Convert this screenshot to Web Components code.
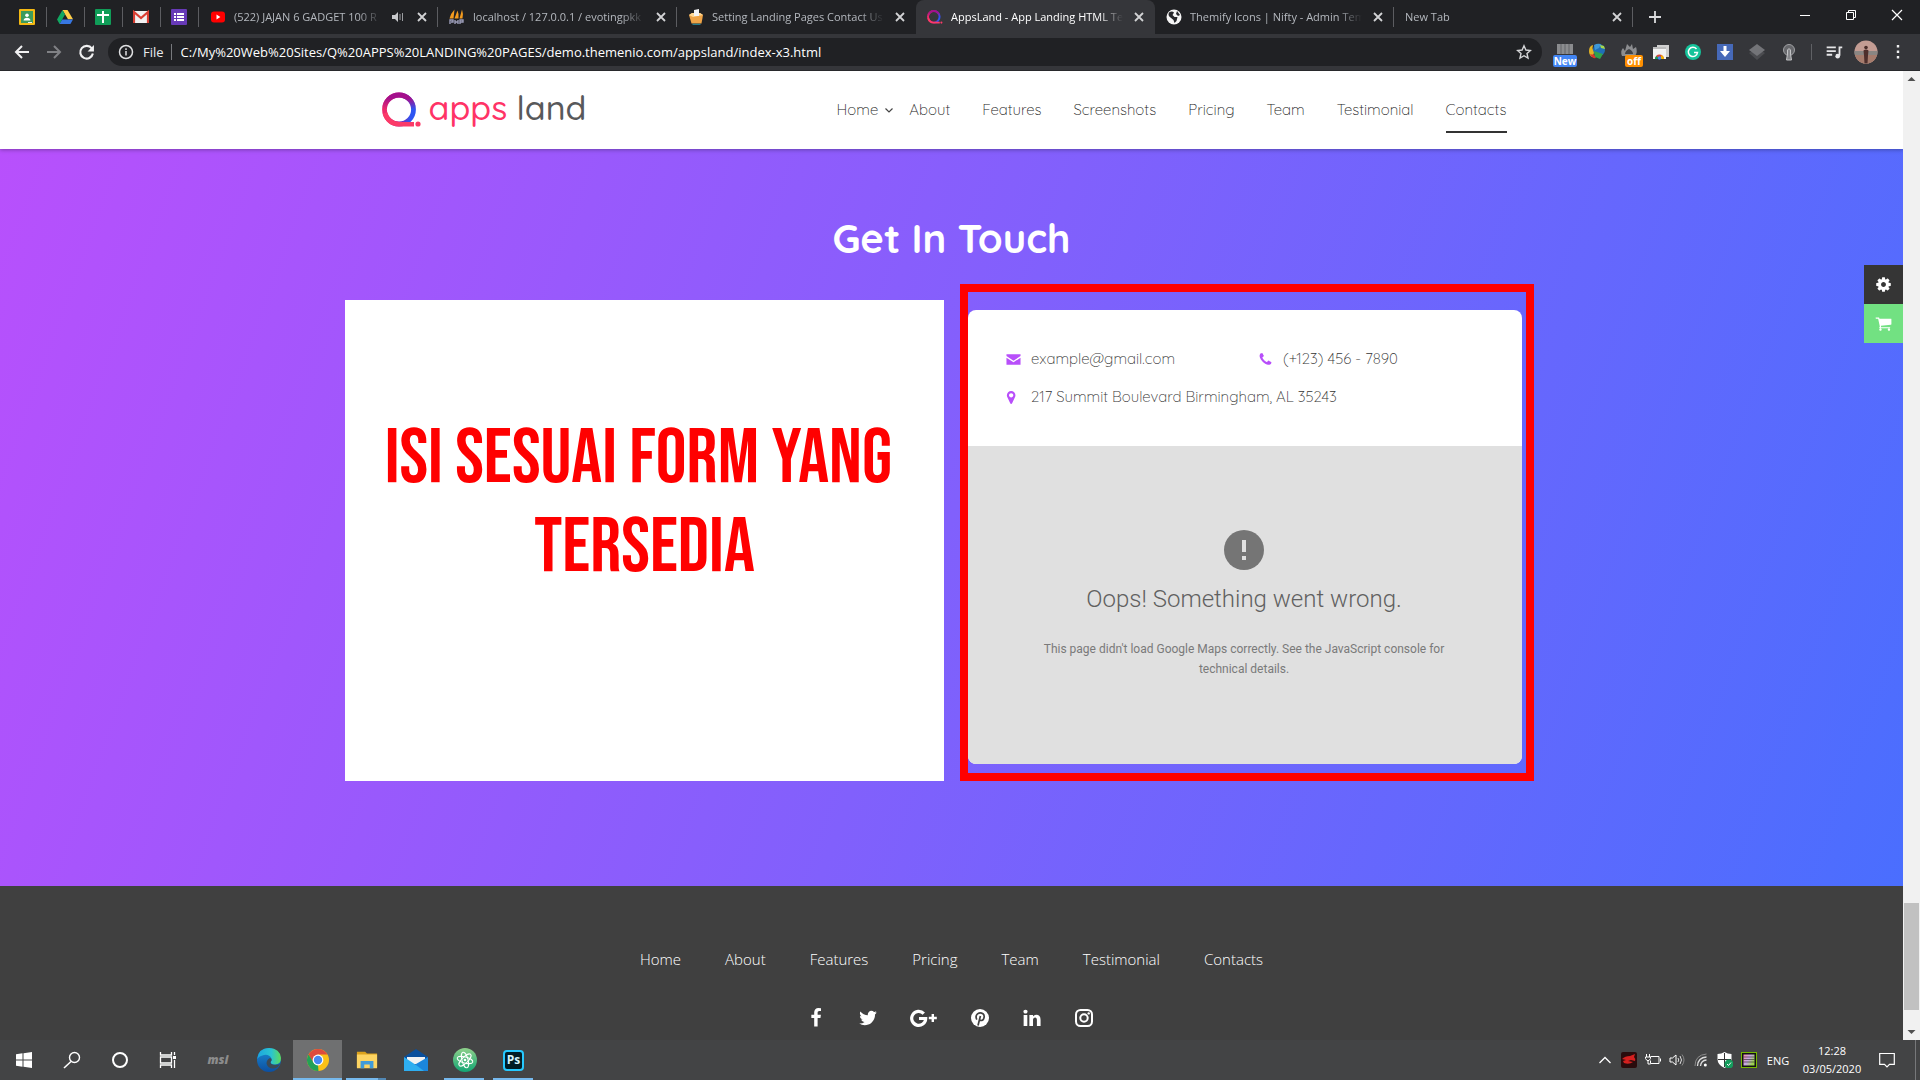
<!DOCTYPE html>
<html lang="en">
<head>
<meta charset="utf-8">
<title>AppsLand - App Landing HTML Template</title>
<style>
html, body { margin: 0; height: 100%; }
body { font-family: "Segoe UI", "Open Sans", "Noto Sans", sans-serif; background: #202124; overflow: hidden; }
</style>
</head>
<body>
<browser-window>
  <tab-strip slot="tabs">
    <browser-tab pinned icon="classroom"></browser-tab>
    <browser-tab pinned icon="drive"></browser-tab>
    <browser-tab pinned icon="sheets"></browser-tab>
    <browser-tab pinned icon="gmail"></browser-tab>
    <browser-tab pinned icon="forms"></browser-tab>
    <browser-tab icon="youtube" audio>(522) JAJAN 6 GADGET 100 R</browser-tab>
    <browser-tab icon="pma">localhost / 127.0.0.1 / evotingpkk</browser-tab>
    <browser-tab icon="box" nosep>Setting Landing Pages Contact Us</browser-tab>
    <browser-tab icon="q" active>AppsLand - App Landing HTML Te</browser-tab>
    <browser-tab icon="globe">Themify Icons | Nifty - Admin Tem</browser-tab>
    <browser-tab>New Tab</browser-tab>
  </tab-strip>
  <tool-bar slot="toolbar" url="C:/My%20Web%20Sites/Q%20APPS%20LANDING%20PAGES/demo.themenio.com/appsland/index-x3.html"></tool-bar>
  <site-header>
    <nav-link menu>Home</nav-link>
    <nav-link>About</nav-link>
    <nav-link>Features</nav-link>
    <nav-link>Screenshots</nav-link>
    <nav-link>Pricing</nav-link>
    <nav-link>Team</nav-link>
    <nav-link>Testimonial</nav-link>
    <nav-link current>Contacts</nav-link>
  </site-header>
  <contact-section>
    <span slot="title">Get In Touch</span>
    <form-note slot="note">ISI SESUAI FORM YANG&nbsp;<br>TERSEDIA</form-note>
    <contact-card slot="card">
      <contact-item icon="mail" href="mailto:example@gmail.com">example@gmail.com</contact-item>
      <contact-item icon="phone" href="tel:+1234567890">(+123) 456 - 7890</contact-item>
      <contact-item icon="pin" wide>217 Summit Boulevard Birmingham, AL 35243</contact-item>
      <map-error slot="map">
        <span slot="heading">Oops! Something went wrong.</span>
        This page didn't load Google Maps correctly. See the JavaScript console for technical details.
      </map-error>
    </contact-card>
  </contact-section>
  <site-footer></site-footer>
  <side-tools slot="tools"></side-tools>
</browser-window>
<task-bar></task-bar>

<script>
const G = '0 0 1792 1792';
const ICONS = {
  classroom: ['0 0 16 16', '<rect width="16" height="16" rx="1" fill="#f4b913"/><rect x="2" y="2" width="12" height="12" fill="#3d9b5c"/><circle cx="8" cy="6.2" r="1.8" fill="#fff"/><path d="M4.5 11.4q.5-2.6 3.5-2.6t3.5 2.6z" fill="#fff"/><path d="M9 14h4v-1H9z" fill="#eee"/>'],
  drive: ['0 0 16 16', '<path d="M5.5 1h5L16 10.2h-5z" fill="#ffcf48"/><path d="M5.5 1 8 5.4 2.6 15 0 10.4z" fill="#11a861"/><path d="M5.2 10.4H16L13.4 15H2.6z" fill="#3777e3"/>'],
  sheets: ['0 0 16 16', '<rect width="16" height="16" rx="1" fill="#109d58"/><path d="M7 2h2v3h5v2H9v7H7V7H2V5h5z" fill="#fff"/>'],
  gmail: ['0 0 16 16', '<path d="M1 2h14v12H1z" fill="#f2f2f2"/><path d="M1 14V3l7 6 7-6v11" fill="none" stroke="#d93f33" stroke-width="2.2"/>'],
  forms: ['0 0 16 16', '<rect width="16" height="16" rx="1" fill="#673ab7"/><path d="M3 4h2v2H3zm0 3h2v2H3zm0 3h2v2H3zm3-6h7v2H6zm0 3h7v2H6zm0 3h7v2H6z" fill="#fff"/>'],
  youtube: ['0 0 16 16', '<rect x="1" y="2.5" width="14" height="11" rx="3" fill="#f00"/><path d="M6.5 5.6 10.4 8l-3.9 2.4z" fill="#fff"/>'],
  pma: ['0 0 16 16', '<path d="M5.500.5Q2 4 .5 9.500h4zM8.500 1.500q1.500 3 1 8H5.500zm4.500-1q1.500 4 .5 9h-3z" fill="#f49b1e"/><path d="M1 15v-4h3v2H2m4-2v4m0-2h3m0-2v4m2 0v-4h3v2h-3" fill="none" stroke="#9b9cb8" stroke-width="1.400"/>'],
  box: ['0 0 16 16', '<path d="m1 6 3-2h8l3 2-1.500 8.500H3.500z" fill="#efa447"/><path d="m1 6 4 2 10-2-3-2H4z" fill="#ffd894"/><path d="M6 1l5-1v7H6z" fill="#f3f4f6"/><path d="M4.500 15.300h8" stroke="#2894a7"/>'],
  q: ['0 0 40 36', '<defs><linearGradient id="a" x1=".1" x2=".9" y1=".6" y2=".7"><stop stop-color="#ee2a6b"/><stop offset=".4" stop-color="#b50d8a"/><stop offset="1" stop-color="#2d55f2"/></linearGradient><linearGradient id="b" x2="0" y2="1"><stop offset=".1" stop-color="#a4108c"/><stop offset=".5" stop-color="#a4108c" stop-opacity="0"/></linearGradient></defs><circle cx="17" cy="17.500" r="14.500" fill="none" stroke="url(#a)" stroke-width="4.800"/><circle cx="17" cy="17.500" r="14.500" fill="none" stroke="url(#b)" stroke-width="4.800"/><path d="M3 21q3 10.500 14 11.200h15" fill="none" stroke="#fb3a68" stroke-width="4.600"/><circle cx="36" cy="32" r="2.600" fill="#fb3a68"/>'],
  globe: ['0 0 16 16', '<circle cx="8" cy="8" r="7.500" fill="#f5f5f5"/><path d="M3 3.500q3-2 5 0L6.500 6l2 2h3l-1 4-2 2-1-3-3-2.500q-3-2-1.500-5zM11 2l3 4-2 1-2-2z" fill="#26272b"/>'],
  audio: ['0 0 16 16', '<path d="M2 6h3l3-3v10l-3-3H2z" fill="#c8c9cc"/><path d="M10 5v6M12.500 4v8" stroke="#9b9da1" fill="none"/>'],
  close: ['0 0 16 16', '<path d="m4 4 8 8m0-8-8 8" stroke="#d2d3d5" stroke-width="1.800"/>'],
  plus: ['0 0 16 16', '<path d="M8 2v12M2 8h12" stroke="#dadbdd" stroke-width="1.800"/>'],
  min: ['0 0 16 16', '<path d="M3 8.500h10" stroke="#fff"/>'],
  max: ['0 0 16 16', '<path d="M3.500 5.500h7v7h-7zm2 0v-2h7v7h-2" fill="none" stroke="#fff"/>'],
  exit: ['0 0 16 16', '<path d="m3 3 10 10m0-10L3 13" stroke="#fff" stroke-width="1.200"/>'],
  back: ['0 0 16 16', '<path d="M15 8H2m6-6L2 8l6 6" fill="none" stroke="#f1f1f2" stroke-width="2"/>'],
  fwd: ['0 0 16 16', '<path d="M1 8h13M8 2l6 6-6 6" fill="none" stroke="#808185" stroke-width="2"/>'],
  reload: ['0 0 16 16', '<path d="M13 4.200A6 6 0 1 0 14 9" fill="none" stroke="#f1f1f2" stroke-width="2"/><path d="M15 1v6H9z" fill="#f1f1f2"/>'],
  info: ['0 0 16 16', '<circle cx="8" cy="8" r="6.500" fill="none" stroke="#dfe0e2" stroke-width="1.500"/><path d="M8 7v4.500M8 4.300v1.600" stroke="#dfe0e2" stroke-width="1.500"/>'],
  star: ['0 0 16 16', '<path d="m8 1.800 1.900 4.200 4.500.5-3.400 3 1 4.500-4-2.300L4 14l1-4.500-3.400-3L6.100 6z" fill="none" stroke="#d4d5d7" stroke-width="1.400"/>'],
  book: ['0 0 24 24', '<path d="M4 4h16v10H4z" fill="#8b8c8f"/><path d="M12 4v10M8 4v10m8-10v10" stroke="#636468"/>'],
  idm: ['0 0 24 24', '<circle cx="14" cy="10" r="6" fill="#1f6fb8"/><path d="M9 5q3-2 7-1l-2 4-4 2z" fill="#3f97d6"/><path d="m15 5 4 1 1 3-4-1z" fill="#a8d84c"/><path d="M4 11q0-5 4-6-1 3 0 5l1 3-2 4q-3-2-3-6z" fill="#e2b326"/><path d="M5 14q3 1 4 0l2 4q-4 1-6-4z" fill="#d9372d"/><path d="m9 11 9 3-3 5-5-2z" fill="#30a24c"/>'],
  fire: ['0 0 24 24', '<path d="M5 16q-2-5 1-8l2 3 2-7 3 3 2-3 1 5 3-2q2 5-1 9z" fill="#8c8d90"/><path d="M8 14q0-3 4-5 4 2 4 5z" fill="#404246"/>'],
  store: ['0 0 24 24', '<path d="M8 5h12v12H8z" fill="#cfcfcf"/><path d="M4 7h13v12H4z" fill="#f3f3f3"/><path d="M4 7h13v2H4z" fill="#bbb"/><path d="M6 19a4.500 4.500 0 0 1 9 0z" fill="#db4437"/><path d="M12 15q3 1 3 4h-3z" fill="#f4b400"/><path d="M6 19q0-2 1.500-3L10 19z" fill="#0f9d58"/><circle cx="10.500" cy="18" r="1.700" fill="#4285f4"/>'],
  gram: ['0 0 24 24', '<circle cx="12" cy="12" r="8" fill="#15c39a"/><path d="M15.500 9A4.600 4.600 0 1 0 16.500 12.500H13" fill="none" stroke="#fff" stroke-width="1.500"/>'],
  down: ['0 0 24 24', '<rect x="4" y="4" width="16" height="16" fill="#4669b8"/><path d="M10.500 6h3v5H17l-5 6-5-6h3.500z" fill="#fff"/>'],
  layers: ['0 0 24 24', '<path d="m12 8 8 5-8 7-8-7z" fill="#4b4c50"/><path d="m12 4 8 6-8 6-8-6z" fill="#737478"/>'],
  touch: ['0 0 24 24', '<circle cx="12" cy="10" r="5.500" fill="#66676b" stroke="#a0a1a4"/><path d="M10.500 10q1.500-3 3 0v4l1 6h-5l1-6z" fill="#85868a" stroke="#c3c4c6"/>'],
  playlist: ['0 0 24 24', '<path d="M4 7h10M4 11h10M4 15h6M18 16V7h3" fill="none" stroke="#e5e5e7" stroke-width="2"/><circle cx="16" cy="16.500" r="2.500" fill="#e5e5e7"/>'],
  avatar: ['0 0 24 24', '<defs><clipPath id="c"><circle cx="12" cy="12" r="11.500"/></clipPath></defs><g clip-path="url(#c)"><path d="M0 0h24v24H0z" fill="#c39c93"/><path d="M0 11h24v4H0z" fill="#8a8683"/><path d="M0 15h24v9H0z" fill="#a67c6d"/><circle cx="12" cy="7.500" r="1.800" fill="#4a2d29"/><path d="M9.500 10.500q2.500-2 5 0l-.5 5-.5 8h-3l-.5-8z" fill="#4e2f2c"/></g>'],
  dots: ['0 0 24 24', '<path d="M10.800 5h2.400v2.400h-2.400zm0 5.500h2.400v2.400h-2.400zm0 5.500h2.400v2.400h-2.400z" fill="#f0f0f1"/>'],
  chevron: ['0 0 10 10', '<path d="m1.500 3.500 3.500 3.500 3.500-3.500" fill="none" stroke="#444" stroke-width="1.200"/>'],
  mail: ['0 0 16 16', '<path d="M.5 2.500h15v1.700L8 9.300.5 4.200zm0 3.500L8 11l7.500-5v7.500H.5z" fill="#b84ffa"/>'],
  phone: [G, '<path fill="#b84ffa" d="M1600 1240q0 27-10 70.500t-21 68.500q-21 50-122 106-94 51-186 51-27 0-53-3.500t-57.500-12.500-47-14.500-55.500-20.500-49-18q-98-35-175-83-127-79-264-216t-216-264q-48-77-83-175-3-9-18-49t-20.500-55.500-14.500-47-12.500-57.500-3.500-53q0-92 51-186 56-101 106-122 25-11 68.500-21t70.500-10q14 0 21 3 18 6 53 76 11 19 30 54t35 63.500 31 53.500q3 4 17.500 25t21.500 35.500 7 28.500q0 20-28.500 50t-62 55-62 53-28.500 46q0 9 5 22.500t8.500 20.500 14 24 11.500 19q76 137 174 235t235 174q2 1 19 11.500t24 14 20.500 8.500 22.500 5q18 0 46-28.500t53-62 55-62 50-28.500q14 0 28.500 7t35.500 21.500 25 17.500q25 15 53.500 31t63.500 35 54 30q70 35 76 53 3 7 3 21z"/>'],
  pin: ['280 0 1792 1792', '<path fill="#b84ffa" d="M1152 640q0-106-75-181t-181-75-181 75-75 181 75 181 181 75 181-75 75-181zm256 0q0 109-33 179l-364 774q-16 33-47.500 52t-67.500 19-67.500-19-46.500-52l-365-774q-33-70-33-179 0-212 150-362t362-150 362 150 150 362z"/>'],
  error: ['0 0 40 40', '<circle cx="20" cy="20" r="20" fill="#757575"/><path d="M18 10h4v12h-4zm0 16h4v4h-4z" fill="#e0e0e0"/>'],
  cog: [G, '<path fill="#fff" d="M1152 896q0-106-75-181t-181-75-181 75-75 181 75 181 181 75 181-75 75-181zm512-109v222q0 12-8 23t-20 13l-185 28q-19 54-39 91 35 50 107 138 10 12 10 25t-9 23q-27 37-99 108t-94 71q-12 0-26-9l-138-108q-44 23-91 38-16 136-29 186-7 28-36 28h-222q-14 0-24.500-8.500t-11.500-21.500l-28-184q-49-16-90-37l-141 107q-10 9-25 9-14 0-25-11-126-114-165-168-7-10-7-23 0-12 8-23 15-21 51-66.500t54-70.500q-27-50-41-99l-183-27q-13-2-21-12.500t-8-23.500v-222q0-12 8-23t19-13l186-28q14-46 39-92-40-57-107-138-10-12-10-24 0-10 9-23 26-36 98.500-107.500t94.500-71.500q13 0 26 10l138 107q44-23 91-38 16-136 29-186 7-28 36-28h222q14 0 24.500 8.500t11.500 21.500l28 184q49 16 90 37l142-107q9-9 24-9 13 0 25 10 129 119 165 170 7 8 7 22 0 12-8 23-15 21-51 66.500t-54 70.500q26 50 41 98l183 28q13 2 21 12.500t8 23.500z"/>'],
  cart: [G, '<path fill="#fff" d="M704 1536q0 52-38 90t-90 38-90-38-38-90 38-90 90-38 90 38 38 90zm896 0q0 52-38 90t-90 38-90-38-38-90 38-90 90-38 90 38 38 90zm128-1088v512q0 24-16.500 42.500t-40.500 21.500l-1044 122q13 60 13 70 0 16-24 64h920q26 0 45 19t19 45-19 45-45 19h-1024q-26 0-45-19t-19-45q0-11 8-31.500t16-36 21.500-40 15.500-29.500l-177-823h-204q-26 0-45-19t-19-45 19-45 45-19h256q16 0 28.500 6.500t19.500 15.500 13 24.500 8 26 5.500 29.500 4.500 26h1201q26 0 45 19t19 45z"/>'],
  facebook: [G, '<path fill="#fff" d="M1343 12v264h-157q-86 0-116 36t-30 108v189h293l-39 296h-254v759h-306v-759h-255v-296h255v-218q0-186 104-288.500t277-102.500q147 0 228 12z"/>'],
  twitter: [G, '<path fill="#fff" d="M1684 408q-67 98-162 167 1 14 1 42 0 130-38 259.500t-115.500 248.500-184.500 210.500-258 146-323 54.500q-271 0-496-145 35 4 78 4 225 0 401-138-105-2-188-64.500t-114-159.500q33 5 61 5 43 0 85-11-112-23-185.500-111.500t-73.500-205.500v-4q68 38 146 41-66-44-105-115t-39-154q0-88 44-163 121 149 294.500 238.500t371.500 99.500q-8-38-8-74 0-134 94.500-228.500t228.500-94.500q140 0 236 102 109-21 205-78-37 115-142 178 93-10 186-50z"/>'],
  gplus: ['0 0 28 20', '<path d="M13.800 5.600A7 7 0 1 0 15.700 10.500H9" fill="none" stroke="#fff" stroke-width="3.200"/><path d="M22.800 6v8m-4-4h8" stroke="#fff" stroke-width="2.400"/>'],
  pinterest: ['0 0 20 20', '<circle cx="10" cy="10" r="9" fill="#fff"/><path d="M6.800 11.600Q5 8 7.500 5.900q2.700-2 5.400-.2 2.100 2 .8 5-1.700 2.900-4.100 1.100M10.400 8 8 17.500" fill="none" stroke="#404040" stroke-width="1.700"/>'],
  linkedin: [G, '<path fill="#fff" d="M477 625v991h-330v-991h330zm21-306q1 73-50.500 122t-135.500 49h-2q-82 0-132-49t-50-122q0-74 51.500-122.500t134.500-48.500 133 48.500 51 122.500zm1166 729v568h-329v-530q0-105-40.500-164.500t-126.500-59.500q-63 0-105.500 34.500t-63.500 85.500q-11 30-11 81v553h-329q2-399 2-647t-1-296l-1-48h329v144h-2q20-32 41-56t56.500-52 87-43.500 114.500-15.500q171 0 275 113.500t104 332.500z"/>'],
  instagram: ['0 0 20 20', '<rect x="2" y="2" width="16" height="16" rx="4.500" fill="none" stroke="#fff" stroke-width="2"/><circle cx="10" cy="10" r="3.700" fill="none" stroke="#fff" stroke-width="2"/><circle cx="14.700" cy="5.400" r="1.200" fill="#fff"/>'],
  up: ['0 0 17 17', '<path d="m8.500 6 4 4h-8z" fill="#505050"/>'],
  dn: ['0 0 17 17', '<path d="m8.500 11 4-4h-8z" fill="#505050"/>'],
  win: ['0 0 24 24', '<path d="m4 6.200 6.500-.9v6.200H4zm7.500-1L20 4v7.500h-8.500zM4 12.500h6.500v6.200L4 17.800zm7.500 0H20V20l-8.500-1.200z" fill="#fff"/>'],
  search: ['0 0 24 24', '<circle cx="14.500" cy="9.500" r="5" fill="none" stroke="#fff" stroke-width="1.400"/><path d="M11 13.500 4 20" stroke="#fff" stroke-width="1.600"/>'],
  cortana: ['0 0 24 24', '<circle cx="12" cy="12" r="7" fill="none" stroke="#fff" stroke-width="2"/>'],
  taskview: ['0 0 24 24', '<path d="M4.500 4v3h11V4m-11 16v-3h11v3m-11-11h11v6h-11zM18.500 4v3m0 5v8" fill="none" stroke="#fff" stroke-width="1.300"/><path d="M17 8h3v3h-3z" fill="#fff"/>'],
  edge: ['0 0 24 24', '<defs><linearGradient id="e" x2="1"><stop stop-color="#1ca5e0"/><stop offset=".6" stop-color="#2bc4cf"/><stop offset="1" stop-color="#5ddc5a"/></linearGradient><linearGradient id="f" x2="0" y2="1"><stop stop-color="#1b8ad3"/><stop offset="1" stop-color="#0c4fa0"/></linearGradient></defs><circle cx="12" cy="12" r="12" fill="url(#f)"/><path d="M.2 11Q1.500 0 12 0q11 .5 12 10 0 7-7 6.500-3.500-.5-3.500-2.500 1.500-1.500 1-3.500Q12 6 7 7 2 8 .2 11z" fill="url(#e)"/><path d="M13.500 14q0 3 5 3 3 0 4.500-1-2 4-6 4.500-6 .5-7.500-5 0-4 3.500-5.500 3 1 .5 4z" fill="#3c4a55"/>'],
  chrome: ['0 0 24 24', '<circle cx="12" cy="12" r="11" fill="#fbc116"/><path d="M2.500 6.500A11 11 0 0 1 21.500 6.500H12L7.200 14.700z" fill="#dd4b3e"/><path d="M2.500 6.500 7.500 14.500 12 17l.5 6A11 11 0 0 1 2.500 6.500z" fill="#23a156"/><circle cx="12" cy="12" r="5.400" fill="#fff"/><circle cx="12" cy="12" r="4.200" fill="#4688f1"/>'],
  explorer: ['0 0 24 24', '<path d="M1 3h9l2 2h11v15H1z" fill="#dba21c"/><path d="M1 6h22v15H1z" fill="#fcd462"/><path d="M5 21v-8h14v8h-4v-4H9v4z" fill="#3f9bd9"/>'],
  mailapp: ['0 0 24 24', '<path d="M0 9 12 1l12 8v3H0z" fill="#0a4f9c"/><path d="M3 9h18v7H3z" fill="#f2f2f2"/><path d="M24 9v14H0z" fill="#1b86dd"/><path d="M0 9v14h20L12 17z" fill="#2eaef0"/>'],
  atom: ['0 0 24 24', '<defs><linearGradient id="g" x2="0" y2="1"><stop stop-color="#8fd18b"/><stop offset="1" stop-color="#12a573"/></linearGradient></defs><circle cx="12" cy="12" r="12" fill="url(#g)"/><g fill="none" stroke="#fff"><ellipse cx="12" cy="12" rx="8" ry="3" transform="rotate(15 12 12)"/><ellipse cx="12" cy="12" rx="8" ry="3" transform="rotate(75 12 12)"/><ellipse cx="12" cy="12" rx="8" ry="3" transform="rotate(135 12 12)"/></g><circle cx="12" cy="12" r="1.300" fill="#fff"/>'],
  tup: ['0 0 16 16', '<path d="m2.500 11 5.500-5.500 5.500 5.500" fill="none" stroke="#fff" stroke-width="1.300"/>'],
  dragon: ['0 0 16 16', '<rect width="16" height="16" rx="2" fill="#2a0c0d"/><path d="M1 7q3-3 8-3l5-2-1 3q2 2 1 4l-4-1-3 1 5 1q-4 3-9 1l-1-2 3-1z" fill="#d5201f"/>'],
  battery: ['0 0 16 16', '<path d="M5.500 4.500H14v7H5.500v-3M15.500 6.500v3M1.500 2v3M4.500 2v3M.5 5h5v1.500L4 8.500H2L.5 6.500zM3 8.500V12h2.500" fill="none" stroke="#fff"/>'],
  speaker: ['0 0 16 16', '<path d="M1 6h2.500L7 3v10l-3.500-3H1z" fill="none" stroke="#fff"/><path d="M9 6q1.500 2 0 4m2-6q3 4 0 8" fill="none" stroke="#ddd"/><path d="M13 2.500q4 5.500 0 11" fill="none" stroke="#888"/>'],
  wifi: ['0 0 16 16', '<path d="M7.500 14q.5-5.500 6-6M4.500 14q.5-8.500 9-9" fill="none" stroke="#ddd" stroke-width="1.300"/><path d="M2 14Q2 3 13.500 2" fill="none" stroke="#8d8d8d"/><circle cx="12.300" cy="13" r="1.500" fill="#fff"/>'],
  shield: ['0 0 16 16', '<path d="M7.500 0q3 2 7 2v5q0 6-7 9-7-3-7-9V2q4 0 7-2z" fill="#fff"/><path d="M7.500 1v14M1 7.500h13" stroke="#333"/><circle cx="12" cy="12" r="4.500" fill="#159c5d"/><path d="m10 12 1.500 1.500L14 10.500" fill="none" stroke="#fff"/>'],
  gpu: ['0 0 16 16', '<defs><linearGradient id="h" x2="1" y2=".6"><stop stop-color="#f38ca8"/><stop offset=".5" stop-color="#c9a7e8"/><stop offset="1" stop-color="#9cd44c"/></linearGradient></defs><rect x=".5" y=".5" width="15" height="15" fill="#111" stroke="#76b900"/><rect x="2.500" y="2.500" width="11" height="11" fill="url(#h)"/><path d="M2.500 5h11M2.500 7.500h11M2.500 10h11" stroke="#222" stroke-width=".6"/>'],
  note: ['0 0 16 16', '<path d="M.7 1.500h14.600v10.800H10.500L8 14.800l-2.500-2.500H.7z" fill="none" stroke="#fff" stroke-width="1.200"/>']
};

function icon(name, w, h = w) {
  const [box, body] = ICONS[name];
  return `<svg aria-hidden="true" width="${w}" height="${h}" viewBox="${box}">${body}</svg>`;
}

const base = `<style>
  :host { display: block; }
  *, *::before { box-sizing: border-box; }
  svg { display: block; flex: none; }
  a { color: inherit; text-decoration: none; }
  button { display: grid; place-items: center; flex: none; margin: 0; padding: 0; border: 0; background: none; color: inherit; font: inherit; }
</style>`;

function define(tag, render) {
  customElements.define(tag, class extends HTMLElement {
    connectedCallback() {
      if (this.shadowRoot) return;
      this.attachShadow({ mode: 'open' }).innerHTML = base + render(this);
    }
  });
}

define('browser-window', () => `<style>
  :host { display: flex; flex-direction: column; height: calc(100vh - 40px); }
  .body { flex: 1; min-height: 0; display: flex; position: relative; border-top: 1px solid #28292c; }
  main { flex: 1; min-width: 0; overflow: hidden; display: flex; flex-direction: column; }
  .bar { width: 17px; flex: none; background: #f1f1f1; display: flex; flex-direction: column; justify-content: space-between; }
  .track { flex: 1; display: flex; flex-direction: column; padding: 0 1px; }
  .before { flex: 816; }
  .thumb { flex: 107; background: #c1c1c1; }
  .after { flex: 13; }
  </style>
  <slot name="tabs"></slot><slot name="toolbar"></slot>
  <div class="body"><main><slot></slot></main>
    <div class="bar">${icon('up', 17)}<div class="track"><div class="before"></div><div class="thumb"></div><div class="after"></div></div>${icon('dn', 17)}</div>
    <slot name="tools"></slot></div>`);

define('tab-strip', () => `<style>
  :host { display: flex; height: 34px; padding-left: 9px; background: #202124; }
  .new { width: 44px; }
  .win { display: flex; margin-left: auto; height: 29px; }
  .win button { width: 46px; }
  </style>
  <slot></slot><button class="new" aria-label="New tab">${icon('plus', 16)}</button>
  <div class="win"><button aria-label="Minimise">${icon('min', 16)}</button><button aria-label="Restore">${icon('max', 16)}</button><button aria-label="Close">${icon('exit', 16)}</button></div>`);

define('browser-tab', el => {
  const pinned = el.hasAttribute('pinned'), active = el.hasAttribute('active'), ic = el.getAttribute('icon');
  return `<style>
  :host { display: flex; align-items: center; flex: none; position: relative; width: ${pinned ? 38 : 239}px; padding: 0 ${pinned ? 12 : 8}px 0 ${pinned ? 10 : 11}px; box-sizing: border-box;
    gap: 8px; font-size: 11px; color: ${active ? '#fff' : '#b4b8be'}; ${active ? 'background: #35363a; border-radius: 8px 8px 0 0;' : ''} }
  :host::after { content: ""; position: absolute; right: 0; top: 7px; width: 1px; height: 20px; background: ${active || el.hasAttribute('nosep') ? 'transparent' : '#5c5d61'}; }
  .t { flex: 1; min-width: 0; overflow: hidden; white-space: nowrap; line-height: 20px; -webkit-mask-image: linear-gradient(to left, transparent, #000 24px); mask-image: linear-gradient(to left, transparent, #000 24px); }
  </style>${ic ? icon(ic, 16) : ''}${pinned ? '' : `<span class="t"><slot></slot></span>${el.hasAttribute('audio') ? icon('audio', 16) : ''}<button aria-label="Close tab">${icon('close', 16)}</button>`}`;
});

define('tool-bar', el => `<style>
  :host { display: flex; align-items: center; height: 36px; padding: 0 6px; background: #35363a; color: #e8eaed; font-size: 13px; }
  .nav { display: flex; width: 102px; } .nav button { width: 32px; height: 32px; }
  .omni { flex: 1; display: flex; align-items: center; height: 28px; border-radius: 14px; background: #202124; padding: 0 10px; gap: 9px; }
  .omni span { border-right: 1px solid #77797d; padding-right: 7px; line-height: 16px; }
  input { flex: 1; min-width: 0; border: 0; padding: 0; background: none; color: #fff; font: inherit; outline: 0; }
  .ext { display: flex; align-items: center; padding-left: 7px; } .ext button { width: 32px; height: 32px; position: relative; }
  .ext b { position: absolute; left: 4px; bottom: 1px; width: 24px; border-radius: 2px; background: #4285f4; color: #fff; font-size: 10px; line-height: 12px; text-align: center; }
  .ext .off { background: #ff8f00; left: 12px; width: 18px; }
  hr { width: 1px; height: 16px; border: 0; margin: 0 6px; background: #606165; }
  </style>
  <div class="nav"><button aria-label="Back">${icon('back', 16)}</button><button aria-label="Forward">${icon('fwd', 16)}</button><button aria-label="Reload">${icon('reload', 17)}</button></div>
  <div class="omni">${icon('info', 16)}<span>File</span><input aria-label="Address" value="${el.getAttribute('url')}">${icon('star', 16)}</div>
  <div class="ext"><button aria-label="Reader">${icon('book', 24)}<b>New</b></button><button aria-label="Download manager">${icon('idm', 24)}</button><button aria-label="Blocker">${icon('fire', 24)}<b class="off">off</b></button>${['store', 'gram', 'down', 'layers', 'touch'].map(n => `<button aria-label="${n}">${icon(n, 24)}</button>`).join('')}<hr><button aria-label="Media">${icon('playlist', 22)}</button><button aria-label="Profile">${icon('avatar', 24)}</button><button aria-label="Menu">${icon('dots', 24)}</button></div>`);

define('site-header', () => `<style>
  :host { background: #fff; box-shadow: 0 1px 4px rgba(0,0,0,.3); position: relative; z-index: 1; }
  header { max-width: 1140px; height: 78px; margin: 0 auto; display: flex; justify-content: space-between; align-items: center; }
  .logo { display: flex; gap: 7px; align-items: center; font: 500 34px/40px Quicksand, Lato, sans-serif; color: #58595b; }
  .logo span { padding-bottom: 4px; }
  .logo b { color: #ff3366; font-weight: 500; }
  nav { display: flex; gap: 32px; padding-right: 15px; }
  </style>
  <header><a class="logo" href="#">${icon('q', 40, 36)}<span><b>apps</b> land</span></a><nav><slot></slot></nav></header>`);

define('nav-link', el => `<style>
  :host { display: block; font: 300 15px/24px Quicksand, Lato, sans-serif; color: #222; ${el.hasAttribute('menu') ? 'margin-right: -17px;' : ''} }
  a { display: flex; align-items: center; gap: 6px; padding: 11px 0 9px; border-bottom: 2px solid ${el.hasAttribute('current') ? '#333' : 'transparent'}; }
  </style><a href="#"><slot></slot>${el.hasAttribute('menu') ? icon('chevron', 10) : ''}</a>`);

define('contact-section', () => `<style>
  :host { flex: none; padding: 65px 0 105px; background: linear-gradient(110deg, #b850fc, #8160fc 50%, #4a6efe); }
  h2 { margin: 0 0 22px; font: 700 40px/48px Quicksand, Lato, sans-serif; color: #fff; text-align: center; }
  .wrap { padding-right: 24px; }
  .cols { max-width: 1189px; margin: 0 auto; display: grid; grid-template-columns: 599fr 574fr; gap: 16px; align-items: stretch; }
  ::slotted(form-note) { margin-top: 16px; }
  .frame { border: 8px solid #f00; padding: 18px 4px 9px 0; }
  </style><h2><slot name="title"></slot></h2>
  <div class="wrap"><div class="cols"><slot name="note"></slot><div class="frame"><slot name="card"></slot></div></div></div>`);

define('form-note', () => `<style>
  :host { background: #fff; }
  p { margin: 0; padding-top: 115px; font: 400 77px/89px "Bebas Neue", "Liberation Sans Narrow", sans-serif; color: #f00; text-align: center; }
  </style><p><slot></slot></p>`);

define('contact-card', () => `<style>
  :host { border-radius: 8px; overflow: hidden; background: #fff; }
  .info { display: grid; grid-template-columns: 1fr 1fr; row-gap: 14px; padding: 37px 12px 37px 38px; }
  </style><div class="info"><slot></slot></div><slot name="map"></slot>`);

define('contact-item', el => {
  const href = el.getAttribute('href');
  return `<style>
  :host { display: flex; align-items: center; gap: 10px; font: 300 15px/24px Quicksand, Lato, sans-serif; color: #333; ${el.hasAttribute('wide') ? 'grid-column: 1 / -1;' : ''} }
  </style>${icon(el.getAttribute('icon'), 15)}${href ? `<a href="${href}"><slot></slot></a>` : '<span><slot></slot></span>'}`;
});

define('map-error', () => `<style>
  :host { display: flex; flex-direction: column; align-items: center; height: 318px; padding: 84px 2px 0 0; box-sizing: border-box; background: #e0e0e0; font-family: Roboto, sans-serif; color: #616161; text-align: center; }
  h3 { margin: 11px 0 22px; font: 300 24px/36px Roboto, sans-serif; }
  p { margin: 0; max-width: 420px; font: 400 12px/20px Roboto, sans-serif; color: #7a7a7a; }
  </style>${icon('error', 40)}<h3><slot name="heading"></slot></h3><p><slot></slot></p>`);

define('site-footer', () => `<style>
  :host { flex: 1 0 auto; background: #404040; color: #fff; padding-top: 61px; }
  nav { display: flex; justify-content: center; align-items: center; gap: 44px; font: 300 15px/24px "Open Sans", sans-serif; }
  .social { gap: 32px; padding: 37px 4px 0 0; height: 57px; }
  </style>
  <nav>${['Home', 'About', 'Features', 'Pricing', 'Team', 'Testimonial', 'Contacts'].map(t => `<a href="#">${t}</a>`).join('')}</nav>
  <nav class="social">${['facebook', 'twitter', 'gplus', 'pinterest', 'linkedin', 'instagram'].map(n => `<a href="#" aria-label="${n}">${n === 'gplus' ? icon(n, 28, 20) : icon(n, 20)}</a>`).join('')}</nav>`);

define('side-tools', () => `<style>
  :host { position: absolute; right: 17px; top: 194px; z-index: 2; }
  button { width: 39px; height: 39px; background: #353535; } .buy { background: #72e182; }
  </style><button aria-label="Settings">${icon('cog', 17)}</button><button class="buy" aria-label="Buy">${icon('cart', 17)}</button>`);

define('task-bar', () => `<style>
  :host { display: flex; height: 40px; background: #434445; color: #fff; font-size: 11px; }
  .apps, .tray { display: flex; align-items: center; }
  .tray { margin-left: auto; }
  button { width: 48px; height: 40px; }
  .app { width: 49px; position: relative; }
  .run::after { content: ""; position: absolute; left: 4px; right: 5px; bottom: 0; height: 2px; background: #76b9ed; }
  .on { background: #6f7071; } .on::after { left: 0; right: 0; }
  .more::after { background: linear-gradient(to right, #76b9ed 80%, #5288b4 80%); }
  .msi { width: 52px; font: italic 800 12px/16px "Open Sans", sans-serif; color: #8c8c8c; }
  .ps { width: 21px; height: 21px; box-sizing: border-box; border: 2px solid #26c9ff; border-radius: 4px; background: #001d26; color: #d5f5ff; font: 700 12px/16px "Open Sans", sans-serif; }
  .tray button { width: 24px; }
  .tray .lang { width: 34px; }
  .tray .clock { width: 74px; line-height: 18px; } .tray .note { width: 36px; }
  .desk { width: 5px; height: 40px; margin-left: 10px; border-left: 1px solid #77787a; }
  </style>
  <div class="apps">${['win', 'search', 'cortana', 'taskview'].map(n => `<button aria-label="${n}">${icon(n, 24)}</button>`).join('')}
  <button class="app msi">msi</button><button class="app" aria-label="Edge">${icon('edge', 24)}</button><button class="app run on" aria-label="Chrome">${icon('chrome', 24)}</button><button class="app run more" aria-label="Explorer">${icon('explorer', 22)}</button><button class="app" aria-label="Mail">${icon('mailapp', 24)}</button><button class="app run" aria-label="Atom">${icon('atom', 24)}</button><button class="app run"><span class="ps">Ps</span></button></div>
  <div class="tray">${['tup', 'dragon', 'battery', 'speaker', 'wifi', 'shield', 'gpu'].map(n => `<button aria-label="${n}">${icon(n, 16)}</button>`).join('')}<button class="lang">ENG</button><button class="clock"><time>12:28<br>03/05/2020</time></button><button class="note" aria-label="Notifications">${icon('note', 16)}</button><i class="desk"></i></div>`);
</script>
</body>
</html>
